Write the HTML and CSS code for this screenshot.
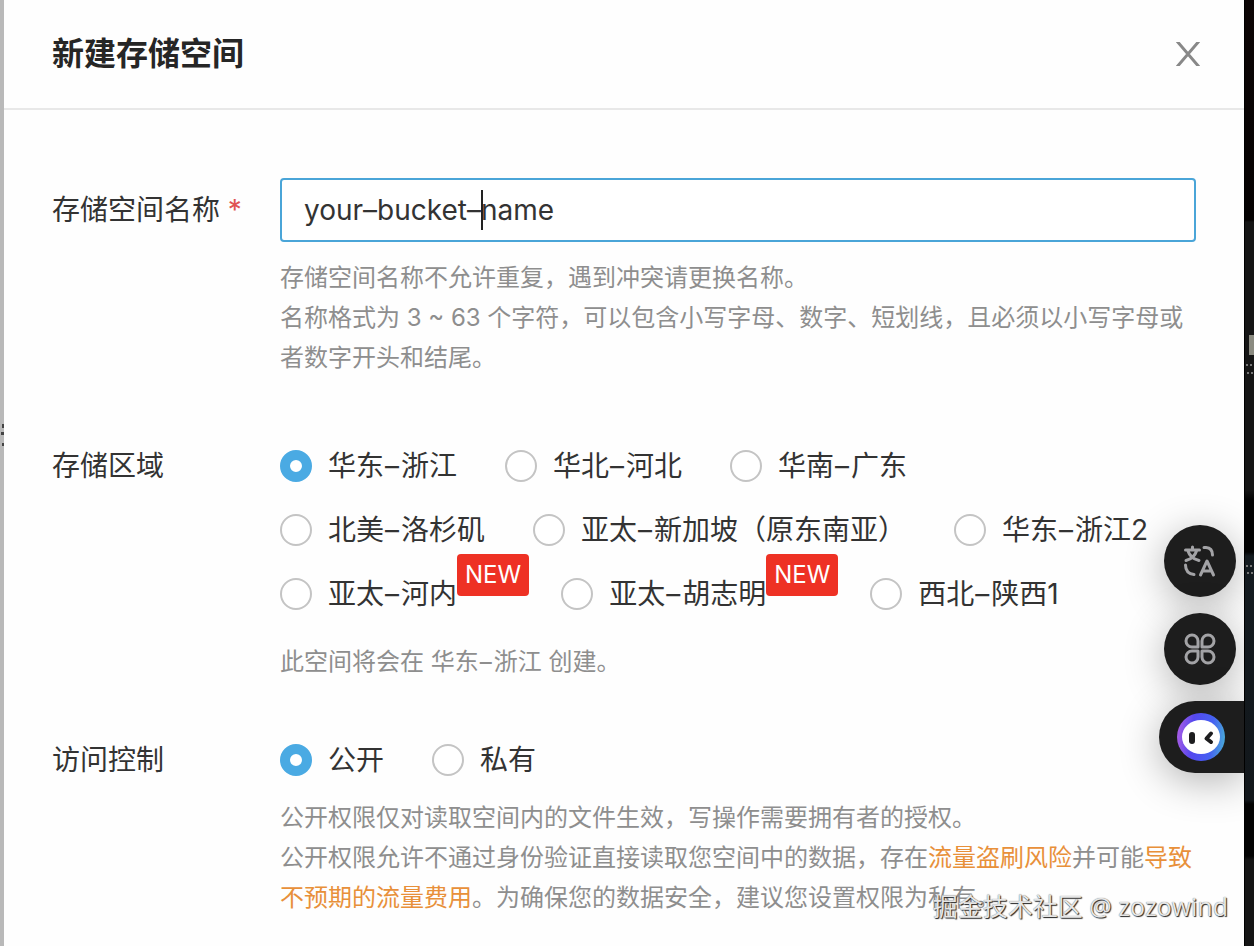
FILE: index.html
```html
<!DOCTYPE html>
<html lang="zh-CN">
<head>
    <meta charset="UTF-8">
    <meta name="viewport" content="width=device-width, initial-scale=1.0">
    <title>新建存储空间</title>
    <link rel="stylesheet" href="styles.css">
</head>
<body>
    <div class="page-edge"></div>
    <main class="drawer">
        <header class="drawer-header">
            <h1>新建存储空间</h1>
            <button class="close" type="button" aria-label="关闭">
                <svg width="24" height="24" viewBox="0 0 24 24"><path d="M0 -2L24 26M24 -2L0 26" fill="none" stroke="#888" stroke-width="3"/></svg>
            </button>
        </header>

        <form class="drawer-body">
            <div class="form-item">
                <label class="form-label" for="bucketName">存储空间名称 <span class="required">*</span></label>
                <div class="form-control">
                    <div class="input-wrap">
                        <input id="bucketName" class="text-input" type="text" value="your–bucket–name">
                        <span class="caret"></span>
                    </div>
                    <p class="help">存储空间名称不允许重复，遇到冲突请更换名称。<br>名称格式为 3 ~ 63 个字符，可以包含小写字母、数字、短划线，且必须以小写字母或者数字开头和结尾。</p>
                </div>
            </div>

            <div class="form-item" role="radiogroup" aria-labelledby="regionLabel">
                <span class="form-label" id="regionLabel">存储区域</span>
                <div class="form-control">
                    <div class="radio-row">
                        <label class="radio"><input type="radio" name="region" checked>华东<span class="dash">–</span>浙江</label>
                        <label class="radio"><input type="radio" name="region">华北<span class="dash">–</span>河北</label>
                        <label class="radio"><input type="radio" name="region">华南<span class="dash">–</span>广东</label>
                    </div>
                    <div class="radio-row">
                        <label class="radio"><input type="radio" name="region">北美<span class="dash">–</span>洛杉矶</label>
                        <label class="radio"><input type="radio" name="region">亚太<span class="dash">–</span>新加坡（原东南亚）</label>
                        <label class="radio"><input type="radio" name="region">华东<span class="dash">–</span>浙江2</label>
                    </div>
                    <div class="radio-row">
                        <label class="radio has-badge"><input type="radio" name="region">亚太<span class="dash">–</span>河内<span class="badge">NEW</span></label>
                        <label class="radio has-badge"><input type="radio" name="region">亚太<span class="dash">–</span>胡志明<span class="badge">NEW</span></label>
                        <label class="radio"><input type="radio" name="region">西北<span class="dash">–</span>陕西1</label>
                    </div>
                    <p class="help">此空间将会在 华东<span class="dash">–</span>浙江 创建。</p>
                </div>
            </div>

            <div class="form-item compact" role="radiogroup" aria-labelledby="aclLabel">
                <span class="form-label" id="aclLabel">访问控制</span>
                <div class="form-control">
                    <div class="radio-row">
                        <label class="radio"><input type="radio" name="acl" checked>公开</label>
                        <label class="radio"><input type="radio" name="acl">私有</label>
                    </div>
                    <p class="help">公开权限仅对读取空间内的文件生效，写操作需要拥有者的授权。<br>公开权限允许不通过身份验证直接读取您空间中的数据，存在<em>流量盗刷风险</em>并可能<em>导致不预期的流量费用</em>。为确保您的数据安全，建议您设置权限为私有。</p>
                </div>
            </div>
        </form>

        <div class="float-tools">
            <button class="tool" type="button" aria-label="翻译">
                <svg width="32" height="32" viewBox="2 0 32 32" fill="none" stroke="#a3a3a6" stroke-width="3" stroke-linecap="round" stroke-linejoin="round">
                    <path d="M3.500 5H17.500M10.500 2V5M14.500 6C13 11 9.500 14 4 15.500M6 6C7.500 11 11 14 17 15.500"/>
                    <path d="M22 2.500H24Q30.500 3 30.500 10"/>
                    <path d="M3.500 20Q3.500 28.500 12 29.500"/>
                    <path d="M18.500 30L25 16L31.500 30M20.500 26H29.500"/>
                </svg>
            </button>
            <button class="tool" type="button" aria-label="应用">
                <svg width="32" height="32" viewBox="0 0 32 32" fill="none" stroke="#a3a3a6" stroke-width="3" stroke-linejoin="round">
                    <path d="M14 14H8A6 6 0 1 1 14 8Z"/>
                    <path d="M18 14H24A6 6 0 1 0 18 8Z"/>
                    <path d="M14 18H8A6 6 0 1 0 14 24Z"/>
                    <path d="M18 18H24A6 6 0 1 1 18 24Z"/>
                </svg>
            </button>
            <button class="tool assistant" type="button" aria-label="智能助手">
                <svg width="48" height="48" viewBox="0 0 48 48">
                    <defs>
                        <linearGradient id="ring" x1="0" y1="0.600" x2="1" y2="0.700">
                            <stop offset="0" stop-color="#a45be6"/>
                            <stop offset="0.300" stop-color="#5548ee"/>
                            <stop offset="0.700" stop-color="#4560f2"/>
                            <stop offset="1" stop-color="#49add8"/>
                        </linearGradient>
                    </defs>
                    <circle cx="24" cy="24" r="24" fill="url(#ring)"/>
                    <ellipse cx="24" cy="24" rx="19" ry="17" fill="#fff"/>
                    <rect x="12" y="19" width="6" height="12" rx="3" fill="#1d1d1f"/>
                    <path d="M34 20.500L29.500 25.500L34 29" fill="none" stroke="#1d1d1f" stroke-width="4" stroke-linecap="round" stroke-linejoin="round"/>
                </svg>
            </button>
        </div>
    </main>
    <div class="desktop-edge"></div>
    <div class="watermark">掘金技术社区 @ zozowind</div>
</body>
</html>
```
FILE: styles.css
```css
* {
    box-sizing: border-box;
}
body {
    margin: 0;
    display: flex;
    min-height: 100vh;
    position: relative;
    overflow-x: hidden;
    font-family: Inter, "Noto Sans CJK SC", sans-serif;
    font-size: 28px;
    color: #333;
}
h1, p {
    margin: 0;
}
button {
    border: 0;
    padding: 0;
    background: none;
    cursor: pointer;
}
/* slivers of the page and desktop behind the drawer */
.page-edge {
    width: 4px;
    background:
        linear-gradient(#444, #444) 2px 424px / 2px 4px no-repeat,
        linear-gradient(#444, #444) 1px 432px / 3px 3px no-repeat,
        linear-gradient(#444, #444) 2px 443px / 2px 3px no-repeat,
        #b9b9b9;
}
.desktop-edge {
    width: 10px;
    border-left: 1px solid #000;
    background:
        linear-gradient(#8a8a80, #8a8a80) 4px 335px / 6px 20px no-repeat,
        linear-gradient(90deg, #777 2px, transparent 2px) 1px 364px / 4px 2px repeat-x,
        linear-gradient(90deg, #777 2px, transparent 2px) 2px 372px / 4px 2px repeat-x,
        linear-gradient(90deg, #777 2px, transparent 2px) 1px 565px / 4px 2px repeat-x,
        linear-gradient(90deg, #777 2px, transparent 2px) 2px 572px / 4px 2px repeat-x,
        linear-gradient(#0d0606, #050202 220px, #151515 222px, #151515 490px, #030303 500px, #030303 552px, #141b20 556px, #12171b 800px, #030303 804px, #030303 856px, #151515 860px);
    background-clip: padding-box;
}
.drawer {
    flex: 1;
    position: relative;
    background: #fefefe;
}
.drawer-header {
    display: flex;
    align-items: center;
    justify-content: space-between;
    height: 110px;
    padding: 0 44px 0 48px;
    border-bottom: 2px solid #e8e8e8;
}
.drawer-header h1 {
    font-size: 32px;
    line-height: 48px;
    font-weight: 600;
    color: #262626;
}
.close svg {
    display: block;
}
.drawer-body {
    padding: 68px 48px 28px;
}
.form-item {
    display: flex;
    margin-bottom: 56px;
    line-height: 64px;
}
.form-item.compact {
    line-height: 44px;
}
.form-item:last-child {
    margin-bottom: 0;
}
.form-label {
    width: 228px;
    flex-shrink: 0;
}
.required {
    color: #e05252;
}
.form-control {
    flex: 1;
}
.input-wrap {
    position: relative;
}
.text-input {
    display: block;
    width: 100%;
    height: 64px;
    padding: 0 22px;
    border: 2px solid #4aa5d8;
    border-radius: 4px;
    background: #fff;
    font: inherit;
    color: #333;
    outline: none;
}
.caret {
    position: absolute;
    left: 201px;
    top: 12px;
    width: 2px;
    height: 40px;
    background: #222;
}
.help {
    margin-top: 16px;
    font-size: 24px;
    line-height: 40px;
    color: #8e8e8e;
}
.help em {
    font-style: normal;
    color: #e8903a;
}
.dash {
    margin: 0 2px 0 1px;
}
.radio-row {
    display: flex;
}
.radio {
    display: flex;
    align-items: center;
    margin-right: 48px;
    white-space: nowrap;
}
.radio.has-badge {
    margin-right: 32px;
}
.radio input {
    appearance: none;
    width: 32px;
    height: 32px;
    margin: 0 16px 0 0;
    border: 2px solid #c4c4c4;
    border-radius: 50%;
    background: #fff;
}
.radio input:checked {
    border: 10px solid #4aaae3;
}
.badge {
    align-self: flex-start;
    margin-top: -8px;
    padding: 0 8px;
    border-radius: 4px;
    background: #ee3124;
    color: #fff;
    font-size: 24px;
    line-height: 42px;
}
.float-tools {
    position: absolute;
    right: 0;
    top: 525px;
    display: flex;
    flex-direction: column;
    align-items: flex-end;
    gap: 16px;
    clip-path: inset(-100px 0 -100px -100px);
}
.tool {
    display: flex;
    align-items: center;
    justify-content: center;
    width: 72px;
    height: 72px;
    margin-right: 8px;
    border-radius: 50%;
    background: #1d1d1d;
    box-shadow: 0 8px 40px rgba(0, 0, 0, 0.3);
}
.tool.assistant {
    width: 85px;
    margin-right: 0;
    padding-right: 2px;
    border-radius: 36px 0 0 36px;
}
.watermark {
    position: absolute;
    right: 26px;
    bottom: 20px;
    font-family: "Open Sans", "Noto Sans CJK SC", sans-serif;
    font-size: 25px;
    line-height: 40px;
    color: #e6e6e6;
    text-shadow: 1px 1px 1px #222, 0 0 1px #666;
}
```
